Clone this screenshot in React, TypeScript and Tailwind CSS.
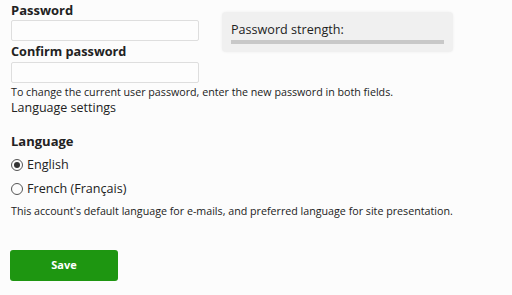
import React from "react";

export default function App() {
  return (
    <div className="w-[512px] min-h-[295px] bg-[#fcfcfc] px-[11px] text-[#222] font-['Open_Sans',sans-serif]">
      <div className="flex items-start">
        <div className="w-[188px] flex flex-col">
          <label className="text-[13px] font-bold leading-[20px] h-[20px]">Password</label>
          <input type="password" className="h-[21px] border border-[#dedede] bg-[#fdfdfd] rounded-[2px] outline-none" />
          <label className="text-[12.7px] font-bold leading-[21px] h-[21px]">Confirm password</label>
          <input type="password" className="h-[21px] border border-[#dedede] bg-[#fdfdfd] rounded-[2px] outline-none" />
        </div>
        <div className="ml-[23px] mt-[12px] w-[231px] h-[40px] bg-[#f0f0f0] rounded-[4px] shadow-[0_0_3px_rgba(0,0,0,0.06)] px-[9px] pt-[9px]">
          <div className="text-[12.6px] leading-[18px]">Password strength:</div>
          <div className="mt-[1px] h-[4px] bg-[#c8c8c8]" />
        </div>
      </div>
      <p className="text-[10.7px] leading-[14px] mt-[2px]">To change the current user password, enter the new password in both fields.</p>
      <div className="text-[12.5px] leading-[18px]">Language settings</div>
      <div className="text-[13px] font-bold leading-[18px] mt-[15px]">Language</div>
      <div className="flex flex-col mt-[3px]">
        <label className="flex items-center h-[24px] text-[12.6px]">
          <span className="w-[12px] h-[12px] rounded-full border border-[#555] flex items-center justify-center mr-[4px]">
            <span className="w-[6px] h-[6px] rounded-full bg-[#333]" />
          </span>
          English
        </label>
        <label className="flex items-center h-[24px] text-[12.6px]">
          <span className="w-[12px] h-[12px] rounded-full border border-[#555] mr-[4px]" />
          French (Français)
        </label>
      </div>
      <p className="text-[10.7px] leading-[14px] mt-[3px]">This account's default language for e-mails, and preferred language for site presentation.</p>
      <button className="mt-[32px] -ml-[1px] w-[108px] h-[31px] bg-[#1e9611] rounded-[3px] text-white text-[11px] font-bold">Save</button>
    </div>
  );
}
